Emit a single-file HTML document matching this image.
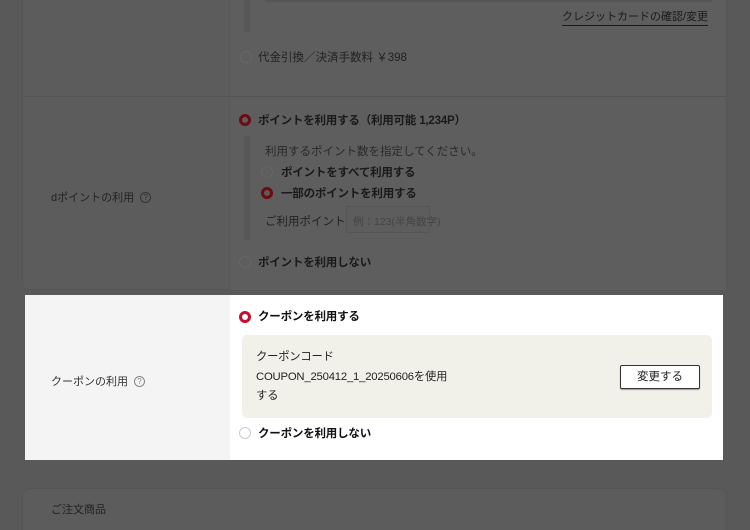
<!DOCTYPE html>
<html style="width:750px;height:530px;overflow:hidden"><head><meta charset="utf-8"><style>
*{margin:0;padding:0;box-sizing:border-box}
body{width:750px;height:530px;background:#595959;font-family:"Liberation Sans","Noto Sans CJK JP",sans-serif;position:relative;overflow:hidden;color:#1e1e1e}
.a{position:absolute;white-space:nowrap}
.card{position:absolute;left:22px;top:-10px;width:705px;height:300px;background:#5c5c5c;border:1px solid #555;border-radius:6px}
.r{position:absolute;width:12px;height:12px;border-radius:50%;border:1px solid #666}
.rd{position:absolute;width:12px;height:12px;border-radius:50%;border:3.5px solid #6e0a12;background:#5c5c5c}
.q{display:inline-block;width:11px;height:11px;border:1px solid #333;border-radius:50%;font-size:8px;line-height:9px;text-align:center;color:#333;margin-left:6px;vertical-align:1px}
.b{font-weight:bold;font-size:11.5px;letter-spacing:-0.2px}
</style></head><body>
<div class="card"></div>
<div class="a" style="left:229px;top:0;width:1px;height:290px;background:#575757"></div>
<div class="a" style="left:230px;top:0;width:496px;height:290px;background:#5e5e5e"></div>
<div class="a" style="left:244px;top:0;width:6px;height:32px;background:#575757"></div>
<div class="a" style="left:265px;top:0;width:447px;height:2px;background:#555"></div>
<div class="a" style="left:562px;top:10px;font-size:11px;color:#1a1a1a;border-bottom:1px solid #1a1a1a;line-height:15px">クレジットカードの確認/変更</div>
<div class="r" style="left:240px;top:51px"></div>
<div class="a" style="left:258px;top:49px;font-size:11.5px;color:#222">代金引換／決済手数料 ￥398</div>
<div class="a" style="left:22px;top:96px;width:705px;height:1px;background:#545454"></div>
<div class="rd" style="left:239px;top:114px"></div>
<div class="a b" style="left:258px;top:112px;color:#1a1a1a">ポイントを利用する（利用可能 1,234P）</div>
<div class="a" style="left:244px;top:136px;width:6px;height:104px;background:#575757"></div>
<div class="a" style="left:265px;top:143px;font-size:11.5px;color:#2a2a2a">利用するポイント数を指定してください。</div>
<div class="r" style="left:261px;top:166px"></div>
<div class="a b" style="left:281px;top:164px;color:#1a1a1a">ポイントをすべて利用する</div>
<div class="rd" style="left:261px;top:187px"></div>
<div class="a b" style="left:281px;top:185px;color:#1a1a1a">一部のポイントを利用する</div>
<div class="a" style="left:265px;top:213px;font-size:11.5px;color:#222">ご利用ポイント</div>
<div class="a" style="left:346px;top:206px;width:84px;height:27px;border:1px solid #565656;background:#5d5d5d;font-size:10.5px;color:#444;padding:7px 0 0 6px">例：123(半角数字)</div>
<div class="r" style="left:239px;top:256px"></div>
<div class="a b" style="left:258px;top:254px;color:#1a1a1a">ポイントを利用しない</div>
<div class="a" style="left:51px;top:189px;font-size:11px;color:#222">dポイントの利用<span class="q">?</span></div>

<div class="a" style="left:25px;top:295px;width:698px;height:165px;background:#fff"></div>
<div class="a" style="left:25px;top:295px;width:205px;height:165px;background:#f4f4f4"></div>
<div class="a" style="left:51px;top:373px;font-size:11px;color:#333">クーポンの利用<span class="q" style="border-color:#888;color:#888">?</span></div>
<div class="rd" style="left:239px;top:311px;border-color:#c8102e;background:#fff"></div>
<div class="a b" style="left:258px;top:308px;color:#111">クーポンを利用する</div>
<div class="a" style="left:242px;top:335px;width:470px;height:83px;background:#f2f1e9;border-radius:5px"></div>
<div class="a" style="left:256px;top:348px;font-size:11.3px;color:#222;line-height:19.5px;white-space:normal;width:210px;letter-spacing:-0.2px">クーポンコード<br>COUPON_250412_1_20250606を使用<br>する</div>
<div class="a" style="left:620px;top:365px;width:80px;height:24px;border:1px solid #333;border-radius:2px;background:#fff;font-size:11.5px;text-align:center;line-height:22px;color:#222;box-shadow:0 1px 1px #999">変更する</div>
<div class="r" style="left:239px;top:427px;border-color:#ccc"></div>
<div class="a b" style="left:258px;top:425px;color:#111">クーポンを利用しない</div>

<div class="a" style="left:22px;top:488px;width:705px;height:50px;background:#5c5c5c;border:1px solid #555;border-radius:8px"></div>
<div class="a" style="left:51px;top:501px;font-size:11px;color:#222">ご注文商品</div>
</body></html>
